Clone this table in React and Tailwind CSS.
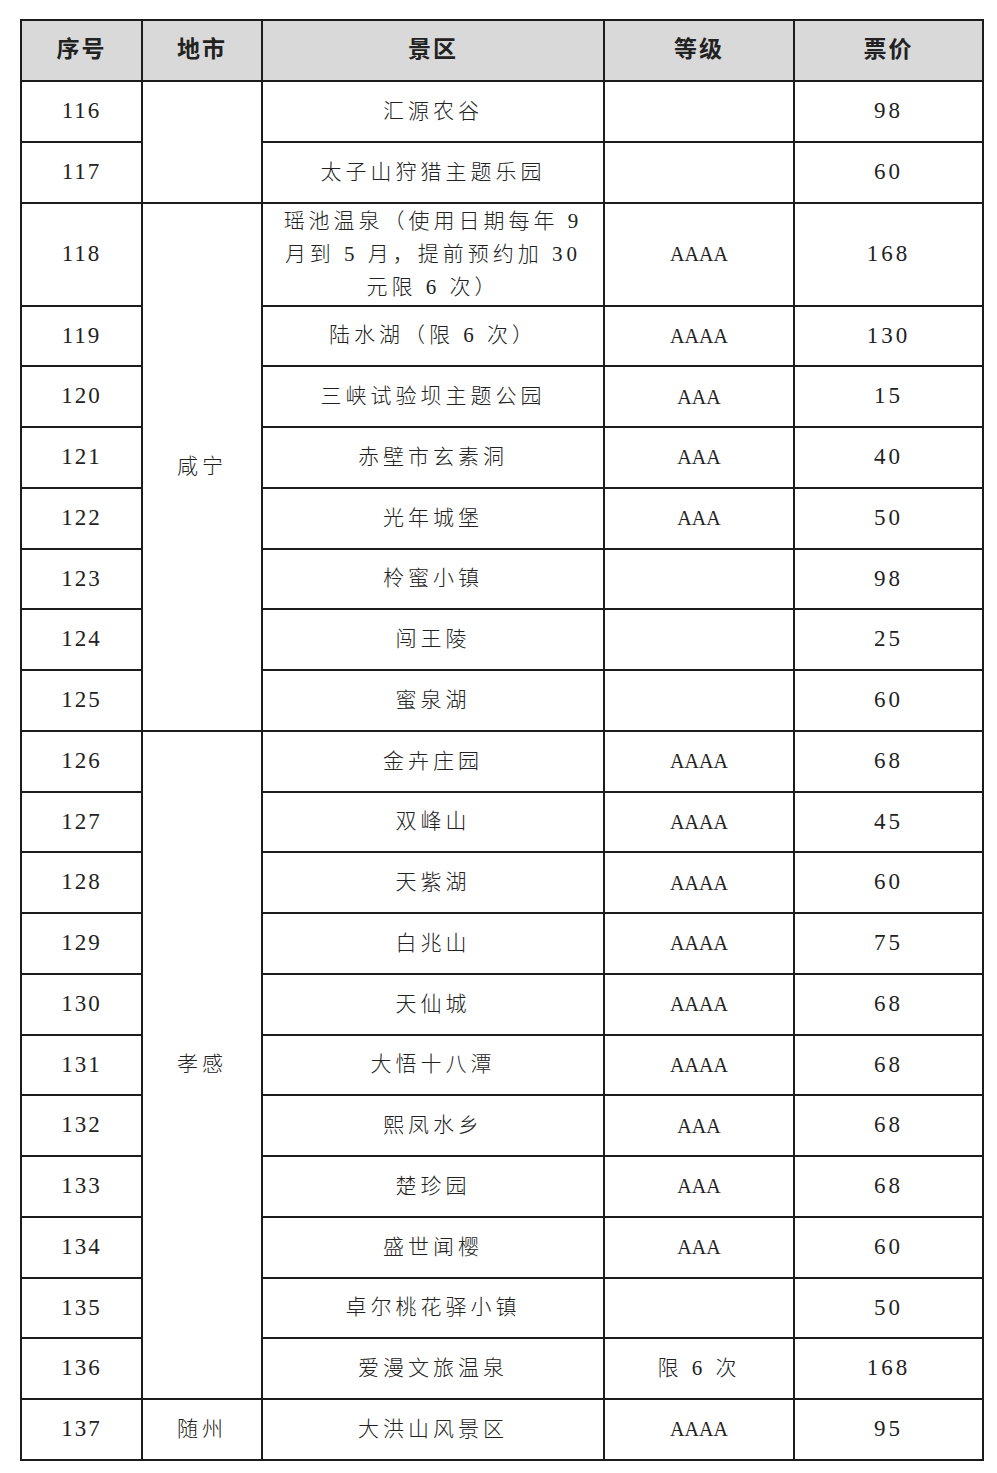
import React from 'react';

const rows = [
  { no: 116, city: { name: '', span: 2 }, spot: '汇源农谷', level: '', price: '98' },
  { no: 117, spot: '太子山狩猎主题乐园', level: '', price: '60' },
  { no: 118, city: { name: '咸宁', span: 8 }, spot: ['瑶池温泉（使用日期每年 9', '月到 5 月，提前预约加 30', '元限 6 次）'], level: 'AAAA', price: '168', tall: true },
  { no: 119, spot: '陆水湖（限 6 次）', level: 'AAAA', price: '130' },
  { no: 120, spot: '三峡试验坝主题公园', level: 'AAA', price: '15' },
  { no: 121, spot: '赤壁市玄素洞', level: 'AAA', price: '40' },
  { no: 122, spot: '光年城堡', level: 'AAA', price: '50' },
  { no: 123, spot: '柃蜜小镇', level: '', price: '98' },
  { no: 124, spot: '闯王陵', level: '', price: '25' },
  { no: 125, spot: '蜜泉湖', level: '', price: '60' },
  { no: 126, city: { name: '孝感', span: 11 }, spot: '金卉庄园', level: 'AAAA', price: '68' },
  { no: 127, spot: '双峰山', level: 'AAAA', price: '45' },
  { no: 128, spot: '天紫湖', level: 'AAAA', price: '60' },
  { no: 129, spot: '白兆山', level: 'AAAA', price: '75' },
  { no: 130, spot: '天仙城', level: 'AAAA', price: '68' },
  { no: 131, spot: '大悟十八潭', level: 'AAAA', price: '68' },
  { no: 132, spot: '熙凤水乡', level: 'AAA', price: '68' },
  { no: 133, spot: '楚珍园', level: 'AAA', price: '68' },
  { no: 134, spot: '盛世闻樱', level: 'AAA', price: '60' },
  { no: 135, spot: '卓尔桃花驿小镇', level: '', price: '50' },
  { no: 136, spot: '爱漫文旅温泉', level: '限 6 次', price: '168' },
  { no: 137, city: { name: '随州', span: 1 }, spot: '大洪山风景区', level: 'AAAA', price: '95' },
];

const cell = 'border-2 border-[#1c1c1c] text-center align-middle p-0';

export default function App() {
  return (
    <div
      className="w-[997px] min-h-[1473px] bg-white pt-[19px] pl-[20px] text-[#222]"
      style={{ fontFamily: '"Liberation Serif", "Noto Sans CJK SC", serif' }}
    >
      <table className="table-fixed border-collapse w-[962px] text-[21px] font-light">
        <colgroup>
          <col className="w-[121px]" />
          <col className="w-[120px]" />
          <col className="w-[342px]" />
          <col className="w-[190px]" />
          <col className="w-[189px]" />
        </colgroup>
        <thead>
          <tr className="h-[61px] bg-[#d9d9d9] text-[23px] font-bold tracking-[2px]">
            <th className={cell}>序号</th>
            <th className={cell}>地市</th>
            <th className={cell}>景区</th>
            <th className={cell}>等级</th>
            <th className={cell}>票价</th>
          </tr>
        </thead>
        <tbody>
          {rows.map((r) => (
            <tr key={r.no} className={r.tall ? 'h-[103px]' : 'h-[60.75px]'}>
              <td className={`${cell} text-[23px] tracking-[2px]`}>{r.no}</td>
              {r.city && (
                <td className={`${cell} tracking-[4px]`} rowSpan={r.city.span}>
                  {r.city.name}
                </td>
              )}
              <td className={`${cell} tracking-[4px] leading-[33px]`}>
                {Array.isArray(r.spot) ? r.spot.map((l) => <div key={l}>{l}</div>) : r.spot}
              </td>
              <td className={`${cell} ${r.level.startsWith('A') ? 'text-[20px] tracking-[0px]' : 'tracking-[4px]'}`}>
                {r.level}
              </td>
              <td className={`${cell} text-[23px] tracking-[3px]`}>{r.price}</td>
            </tr>
          ))}
        </tbody>
      </table>
    </div>
  );
}
